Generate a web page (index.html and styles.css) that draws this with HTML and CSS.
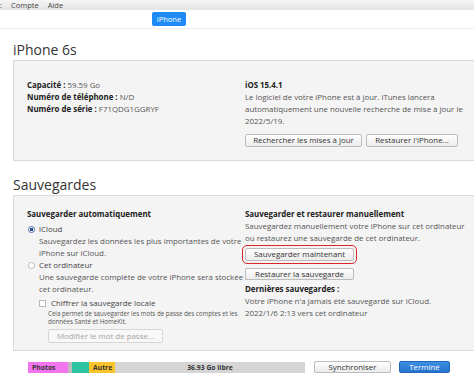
FILE: index.html
```html
<html lang="fr">
<head>
    <meta charset="UTF-8">
    <title>iTunes - iPhone</title>
    <link rel="stylesheet" href="styles.css">
</head>
<body>
    <div class="app">
        <div class="menubar">
            <span class="cut">:</span>
            <span>Compte</span>
            <span>Aide</span>
        </div>
        <div class="tabbar">
            <span class="tab">iPhone</span>
        </div>

        <div class="main">
            <div class="content">
                <h1>iPhone 6s</h1>
                <section class="panel summary">
                    <div class="col">
                        <p><b>Capacité :</b> 59.59 Go</p>
                        <p><b>Numéro de téléphone :</b> N/D</p>
                        <p><b>Numéro de série :</b> F71QDG1GGRYF</p>
                    </div>
                    <div class="col">
                        <p class="title">iOS 15.4.1</p>
                        <p>Le logiciel de votre iPhone est à jour. iTunes lancera<br>automatiquement une nouvelle recherche de mise à jour le<br>2022/5/19.</p>
                        <div class="btn-row">
                            <button class="btn w-update">Rechercher les mises à jour</button>
                            <button class="btn w-restore">Restaurer l'iPhone...</button>
                        </div>
                    </div>
                </section>

                <h2>Sauvegardes</h2>
                <section class="panel backups">
                    <div class="col">
                        <p class="title">Sauvegarder automatiquement</p>
                        <label class="option first"><span class="radio checked"></span>iCloud</label>
                        <p class="desc">Sauvegardez les données les plus importantes de votre<br>iPhone sur iCloud.</p>
                        <label class="option"><span class="radio"></span>Cet ordinateur</label>
                        <p class="desc">Une sauvegarde complète de votre iPhone sera stockée sur<br>cet ordinateur.</p>
                        <label class="check"><span class="box"></span>Chiffrer la sauvegarde locale</label>
                        <p class="small">Cela permet de sauvegarder les mots de passe des comptes et les<br>données Santé et HomeKit.</p>
                        <button class="btn disabled w-pass">Modifier le mot de passe...</button>
                    </div>
                    <div class="col">
                        <p class="title">Sauvegarder et restaurer manuellement</p>
                        <p>Sauvegardez manuellement votre iPhone sur cet ordinateur<br>ou restaurez une sauvegarde de cet ordinateur.</p>
                        <button class="btn w-backup highlight">Sauvegarder maintenant</button>
                        <button class="btn w-backup second">Restaurer la sauvegarde</button>
                        <p class="title last">Dernières sauvegardes :</p>
                        <p>Votre iPhone n'a jamais été sauvegardé sur iCloud.<br>2022/1/6 2:13 vers cet ordinateur</p>
                    </div>
                </section>
            </div>
            <div class="scrollbar"><div class="thumb"></div></div>
        </div>

        <div class="footer">
            <div class="storage">
                <span class="seg photos">Photos</span>
                <span class="seg apps"></span>
                <span class="seg media"></span>
                <span class="seg other">Autre</span>
                <span class="seg free">36.93 Go libre</span>
            </div>
            <button class="btn w-sync">Synchroniser</button>
            <button class="btn primary w-done">Terminé</button>
        </div>
    </div>
</body>
</html>
```

FILE: styles.css
```css
body {
    margin: 0;
    font-family: "Open Sans", "Noto Sans", sans-serif;
    font-size: 7.9px;
    line-height: 12px;
    color: #555;
    background-color: #fff;
}

.app {
    width: 474px;
    height: 379px;
    display: flex;
    flex-direction: column;
    overflow: hidden;
}

p {
    margin: 0;
    white-space: nowrap;
}

b,
.title {
    color: #222;
    font-weight: 700;
}

/* menu + tab */
.menubar {
    height: 10px;
    display: flex;
    align-items: center;
    gap: 9px;
    font-size: 7.5px;
    line-height: 10px;
    color: #444;
    background: linear-gradient(#f6f6f6, #e4e4e4);
}

.menubar .cut {
    width: 2px;
    overflow: hidden;
}

.tabbar {
    height: 18px;
    display: flex;
    align-items: center;
    padding-left: 152px;
    border-bottom: 1px solid #ececec;
}

.tab {
    width: 34px;
    height: 14px;
    line-height: 14px;
    text-align: center;
    font-size: 7.5px;
    color: #fff;
    background-color: #1e8af5;
    border-radius: 2px;
}

/* main scroll area */
.main {
    height: 323px;
    display: flex;
    overflow: hidden;
}

.content {
    flex: 1;
    padding: 0 3px 0 13px;
}

.scrollbar {
    width: 4px;
    padding-top: 10px;
    background-color: #f1f1f1;
}

.thumb {
    height: 182px;
    background-color: #c2c2c2;
}

h1,
h2 {
    margin: 0;
    font-size: 14px;
    line-height: 20px;
    font-weight: 400;
    color: #333;
}

h1 {
    margin-top: 11px;
}

h2 {
    margin-top: 14px;
}

.panel {
    display: grid;
    grid-template-columns: 218px 1fr;
    background-color: #f4f4f4;
    border: 1px solid #dadada;
}

.summary {
    padding: 18px 13px 13px 13px;
}

.backups {
    padding: 12px 13px 7px 13px;
}

.btn-row {
    display: flex;
    gap: 4px;
    margin-top: 7px;
}

/* buttons */
.btn {
    height: 13px;
    padding: 0;
    font-family: inherit;
    font-size: 7.9px;
    line-height: 11px;
    color: #333;
    background: linear-gradient(#fefefe, #ececec);
    border: 1px solid #bcbcbc;
    border-radius: 2px;
    white-space: nowrap;
}

.btn.disabled {
    color: #a5a5a5;
    background: #f8f8f8;
    border-color: #d6d6d6;
}

.btn.primary {
    color: #fff;
    background: linear-gradient(#3d8fe3, #2873cf);
    border-color: #1f66bd;
}

.w-update { width: 117px; }
.w-restore { width: 92px; }
.w-pass { width: 115px; height: 14px; margin-top: 3px; margin-left: 21px; display: block; }
.w-backup { width: 109px; display: block; }
.w-sync { width: 77px; height: 12px; }
.w-done { width: 51px; height: 12px; margin-left: 8px; }

.highlight {
    margin-top: 4px;
    outline: 1.5px solid #d8262c;
    outline-offset: 2px;
}

.second {
    margin-top: 7px;
    height: 12px;
}

.title.last {
    margin-top: 3px;
}

/* options */
.option,
.check {
    display: flex;
    align-items: center;
    gap: 4px;
    height: 12px;
    padding-left: 1px;
    color: #444;
}

.option.first {
    margin-top: 3px;
}

.radio {
    width: 5px;
    height: 5px;
    border: 1px solid #b8b8b8;
    border-radius: 50%;
    background-color: #fff;
}

.radio.checked {
    border-color: #4a6fa8;
    background: radial-gradient(circle, #2c4f8a 0, #2c4f8a 1.5px, #fff 2px);
}

.desc {
    padding-left: 12px;
}

.check {
    margin-top: 2px;
    padding-left: 12px;
    gap: 5px;
}

.box {
    width: 5px;
    height: 5px;
    border: 1px solid #b8b8b8;
    background-color: #fff;
}

.small {
    padding-left: 21px;
    font-size: 6.2px;
    line-height: 8px;
    margin-top: 1px;
}

/* footer */
.footer {
    flex: 1;
    display: flex;
    align-items: flex-start;
    padding: 9px 0 0 28px;
}

.storage {
    width: 277px;
    height: 11px;
    margin-top: 1px;
    margin-right: 9px;
    display: flex;
    font-size: 6.8px;
    line-height: 11px;
    font-weight: 700;
    color: #333;
    background-color: #d5d5d5;
}

.seg {
    padding-left: 4px;
    box-sizing: border-box;
}

.photos { width: 40px; background-color: #f374ef; }
.apps { width: 3px; background-color: #bcbcbc; }
.media { width: 17px; background-color: #2ec3a1; }
.other { width: 26px; background-color: #fbc42a; }
.free { flex: 1; text-align: center; padding-left: 0; }
```
